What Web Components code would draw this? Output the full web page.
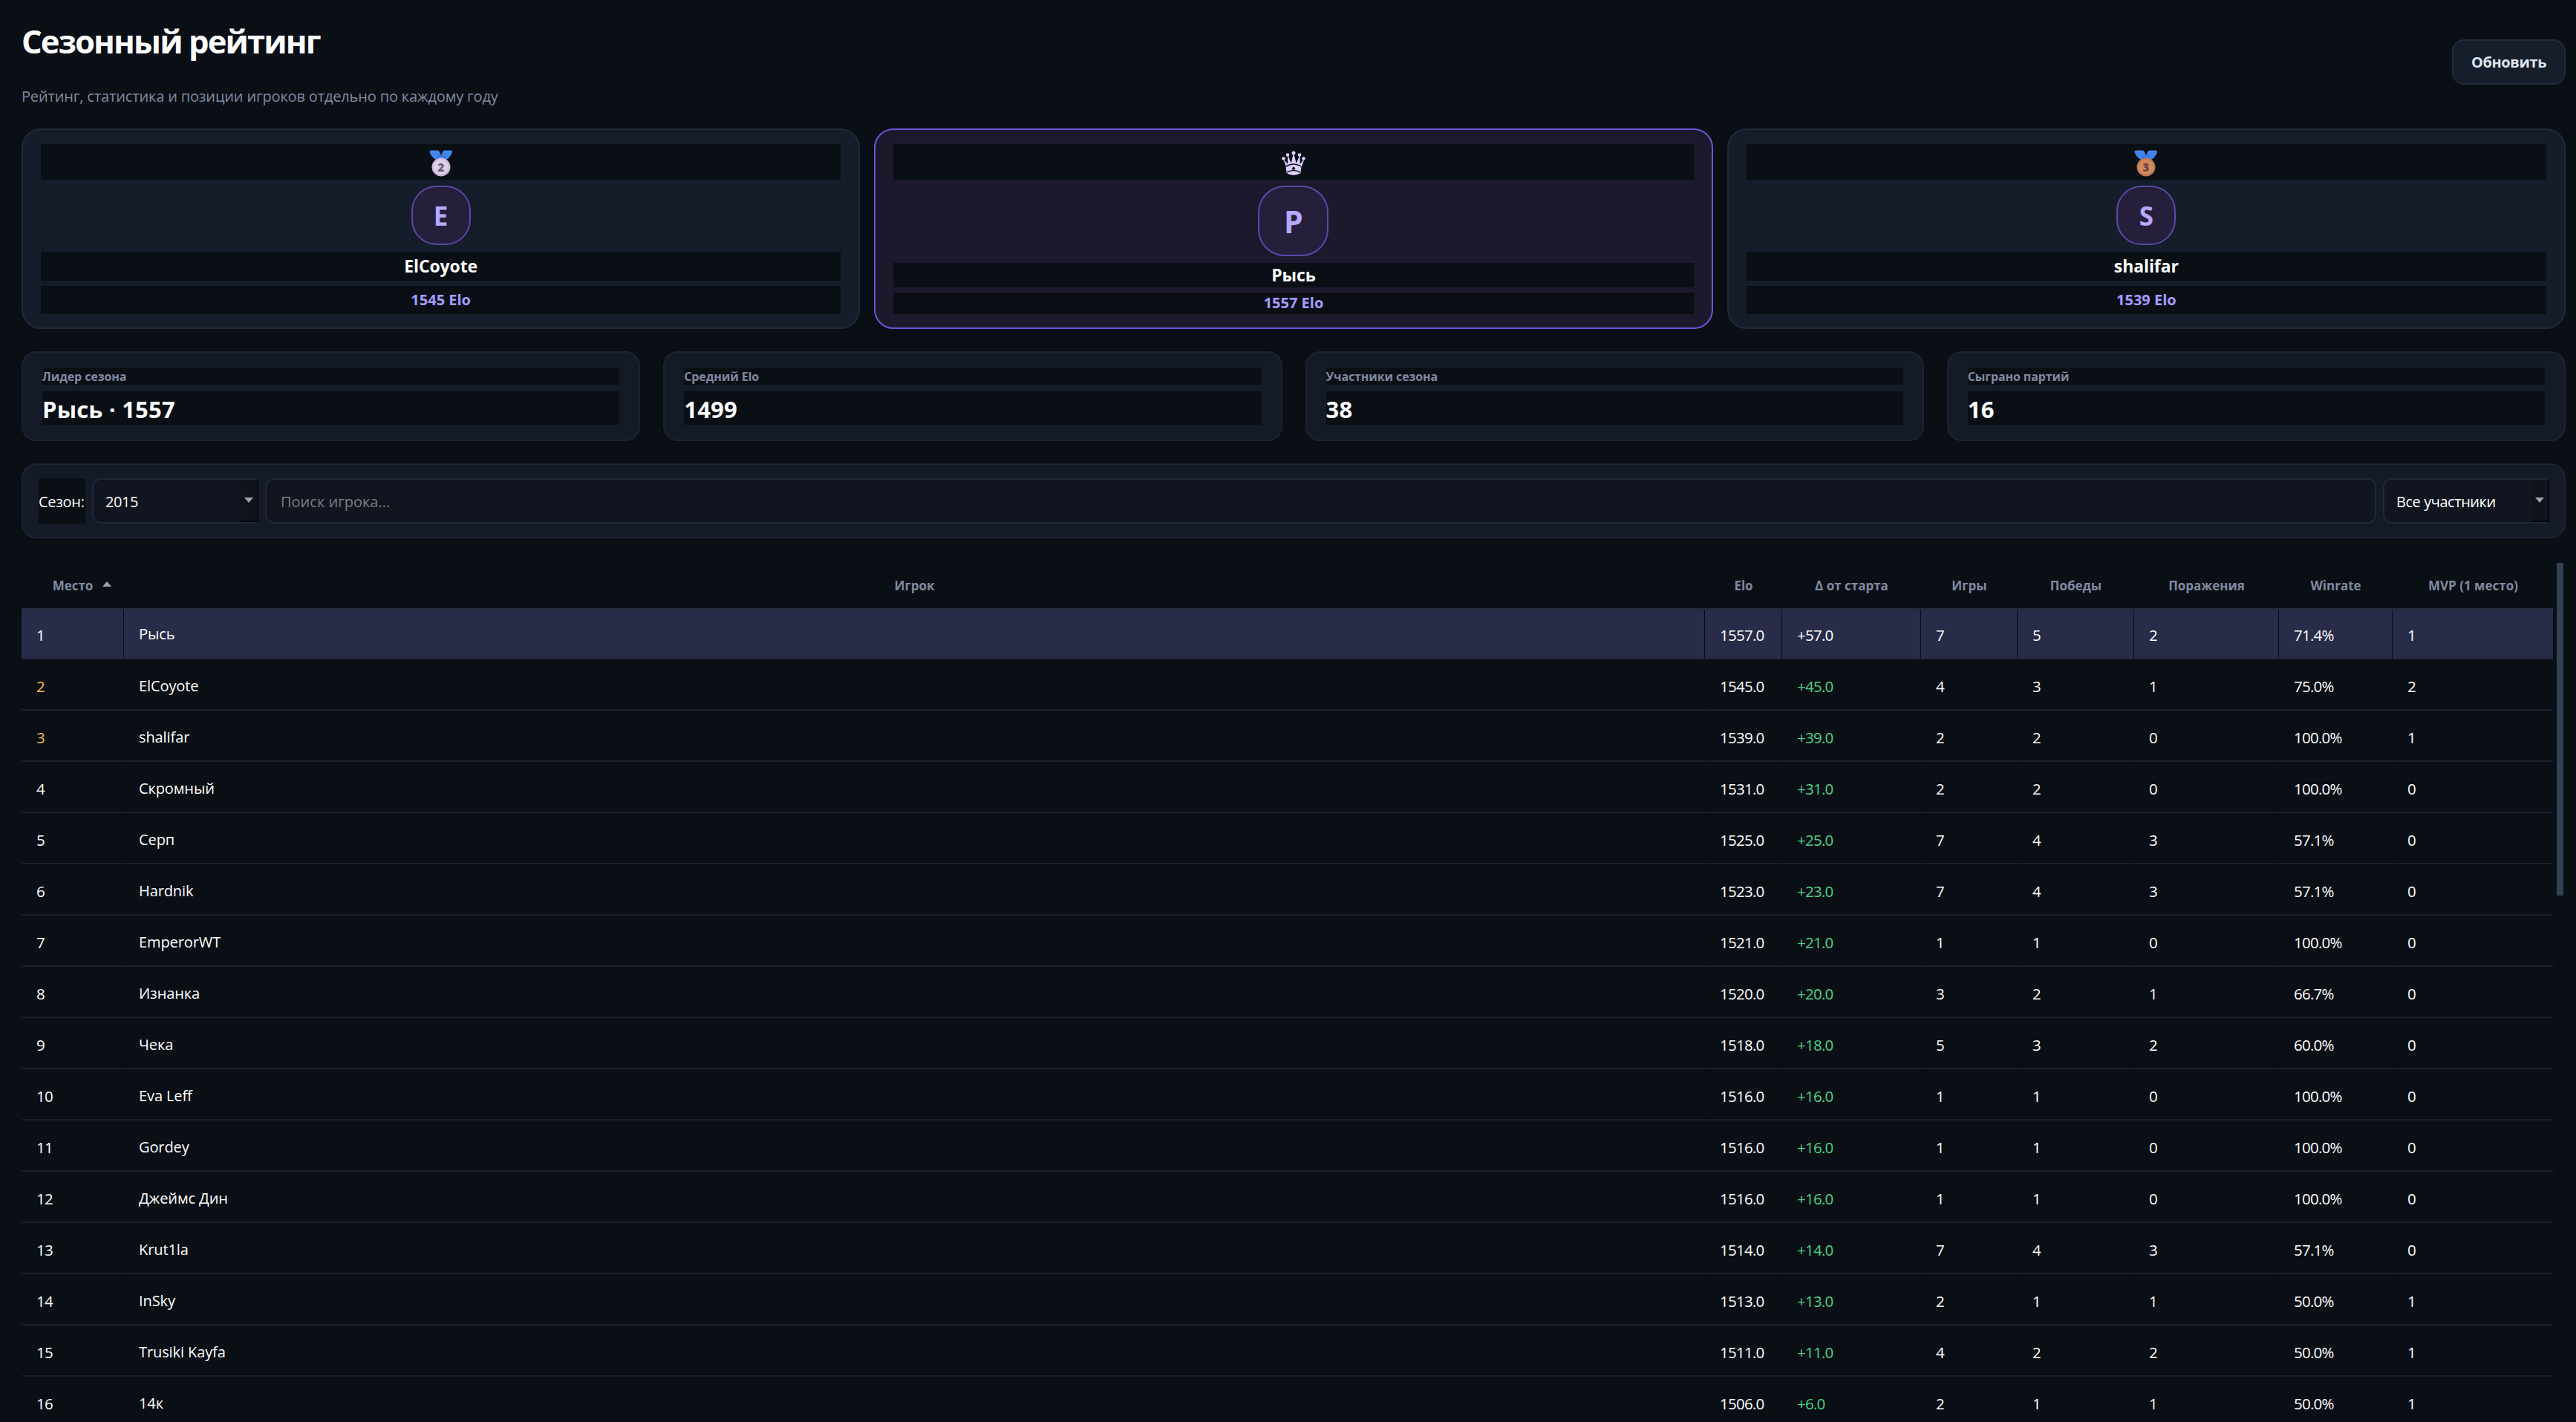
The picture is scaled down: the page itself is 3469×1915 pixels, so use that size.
<!DOCTYPE html>
<html lang="ru">
<head>
<meta charset="utf-8">
<title>Сезонный рейтинг</title>
<style>
  html, body { margin: 0; height: 100%; overflow: hidden; background: #0a0e15; }
  body { font-family: 'Open Sans', 'Noto Sans', sans-serif; color: #fff; }
</style>
</head>
<body>
<rating-page></rating-page>
<script>
const define = (name, html, setup) => {
  const template = document.createElement('template');
  template.innerHTML = html;
  customElements.define(name, class extends HTMLElement {
    constructor() {
      super();
      this.attachShadow({ mode: 'open' }).appendChild(template.content.cloneNode(true));
    }

    connectedCallback() {
      if (setup) setup(this, this.shadowRoot);
    }
  });
};

const medal = (number, face, rim, ink) => `
  <svg width="32" height="36" viewBox="0 0 32 36">
    <path d="M.5 1.5Q1 .5 3 .5h8q2 0 3 2l2 5 2-5q1-2 3-2h8q2 0 2 1.5 0 3-2.500 6L25 12H7L2.800 7.500Q.3 4 .5 1.500z" fill="#4286ec"/>
    <path d="M14.500 4l1.500 4-3 5H8zM17.500 4L16 8l3 5h5z" fill="#347be5"/>
    <circle cx="16" cy="23" r="12.500" fill="${rim}"/>
    <circle cx="16" cy="22.700" r="10.300" fill="${face}"/>
    <text x="16" y="28.500" text-anchor="middle" font-family="Open Sans" font-size="15" font-weight="800" fill="${ink}">${number}</text>
  </svg>`;

const ICONS = {
  silver: medal(2, '#ddcfe8', '#cbb5d8', '#665b70'),
  bronze: medal(3, '#d28b58', '#bf7654', '#71404a'),
  crown: `
  <svg width="32" height="34" viewBox="0 0 32 34" fill="#ddd2ff">
    <circle cx="2.500" cy="10.500" r="2.300"/><circle cx="8" cy="5.500" r="2.300"/><circle cx="16" cy="3" r="2.500"/>
    <circle cx="24" cy="5.500" r="2.300"/><circle cx="29.500" cy="10.500" r="2.300"/>
    <path d="M2 11l4 10 21 0 3.500-10-6 7 .2-13-5 12L16 3l-3.200 14L8 5l.2 13z"/>
    <path d="M5.500 20Q16 14 26.500 20L25.500 30Q16 36 6.500 30z"/>
    <path d="M6 21q10-6 20 0M7 29q9-5 18 0" fill="none" stroke="#0a0e15" stroke-width="1.600"/>
    <path d="M16 21l2.500 3-2.500 3-2.500-3z" fill="#0a0e15"/>
  </svg>`,
};

define('app-button', `
  <style>
    :host {
      box-sizing: border-box;
      width: 153px;
      height: 61px;
      display: flex;
      align-items: center;
      justify-content: center;
      border: 2px solid #222b3c;
      border-radius: 16px;
      background: #171e2b;
      color: #dfe5ee;
      font-size: 20px;
      font-weight: 700;
      letter-spacing: -.4px;
    }
  </style>
  <slot></slot>
`);

define('page-header', `
  <style>
    :host { display: flex; justify-content: space-between; height: 144px; }
    h1 { margin: -3px 0 0; font-size: 43.500px; line-height: 60px; letter-spacing: -1.850px; }
    p { margin: 30px 0 0; font-size: 20px; line-height: 28px; letter-spacing: -.16px; color: #7f8ba0; }
    app-button { margin-top: 24px; }
  </style>
  <div>
    <h1>Сезонный рейтинг</h1>
    <p>Рейтинг, статистика и позиции игроков отдельно по каждому году</p>
  </div>
  <app-button>Обновить</app-button>
`);

define('podium-card', `
  <style>
    :host {
      box-sizing: border-box;
      display: flex;
      flex-direction: column;
      gap: 7px;
      padding: 19px 24px 18px;
      border: 2px solid #202a3b;
      border-radius: 26px;
      background: #151c2a;
      text-align: center;
    }
    :host([leader]) { background: #1c192d; border-color: #6b56d6; }
    div { background: #0a0e15; display: flex; align-items: center; justify-content: center; }
    .icon { height: 48px; }
    .icon svg { display: block; margin-top: 4px; }
    .avatar {
      box-sizing: border-box;
      width: 80px;
      height: 80px;
      margin: 1px auto 2px;
      border: 2px solid #584aa8;
      border-radius: 34px;
      background: #261f3c;
      color: #b7a8ff;
      font-size: 35px;
      font-weight: 700;
    }
    .name { height: 39px; line-height: 37px; font-size: 23px; font-weight: 700; letter-spacing: -.1px; }
    .elo { height: 38px; line-height: 36px; font-size: 20px; font-weight: 700; color: #a59cff; }
    .elo { box-sizing: border-box; padding-bottom: 1px; }
    :host([leader]) .avatar { width: 95px; height: 95px; border-radius: 36px; font-size: 41px; }
    :host([leader]) .name { height: 33px; }
    :host([leader]) .elo { height: 29px; }
  </style>
  <div class="icon"></div>
  <div class="avatar"></div>
  <div class="name"><slot></slot></div>
  <div class="elo"></div>
`, (host, root) => {
  root.querySelector('.icon').innerHTML = ICONS[host.getAttribute('icon')];
  root.querySelector('.avatar').textContent = host.getAttribute('letter');
  root.querySelector('.elo').textContent = host.getAttribute('elo') + ' Elo';
});

define('stat-card', `
  <style>
    :host {
      box-sizing: border-box;
      display: flex;
      flex-direction: column;
      gap: 9px;
      padding: 20px 26px;
      border: 2px solid #1c2433;
      border-radius: 20px;
      background: #151a27;
      font-weight: 700;
    }
    .label { height: 23px; line-height: 25px; font-size: 16px; color: #7f8ba0; background: #0a0e15; letter-spacing: -.1px; }
    .value { height: 45px; line-height: 49px; font-size: 31px; background: #0a0e15; letter-spacing: .2px; }
  </style>
  <div class="label"></div>
  <div class="value"><slot></slot></div>
`, (host, root) => {
  root.querySelector('.label').textContent = host.getAttribute('label');
});

define('select-box', `
  <style>
    :host {
      box-sizing: border-box;
      width: 224px;
      height: 61px;
      display: flex;
      align-items: center;
      padding-left: 16px;
      border: 2px solid #1f2838;
      border-right: none;
      border-radius: 12px 6px 6px 12px;
      background: #10151f;
    }
    span { flex: 1; padding-top: 2px; letter-spacing: -.45px; }
    i {
      box-sizing: border-box;
      width: 24px;
      height: 57px;
      display: flex;
      align-items: center;
      justify-content: center;
      border-right: 2px solid #05070b;
      border-bottom: 2px solid #05070b;
      background: #0f131c;
    }
  </style>
  <span><slot></slot></span>
  <i><svg width="12" height="7" viewBox="0 0 12 7"><path d="M0 0h12L6 7z" fill="#a0a3a8"/></svg></i>
`);

define('filter-bar', `
  <style>
    :host {
      box-sizing: border-box;
      display: flex;
      align-items: center;
      gap: 9px;
      height: 101px;
      padding: 0 20px 0 21px;
      border: 2px solid #1c2433;
      border-radius: 20px;
      background: #151a27;
      font-size: 20px;
    }
    label { width: 63px; height: 61px; line-height: 63px; background: #0a0e15; white-space: nowrap; letter-spacing: -.3px; }
    .search {
      box-sizing: border-box;
      flex: 1;
      height: 61px;
      line-height: 59px;
      padding-left: 19px;
      border: 2px solid #1f2838;
      border-radius: 12px;
      background: #10151f;
      color: #797d83;
    }
  </style>
  <label>Сезон:</label>
  <select-box>2015</select-box>
  <div class="search">Поиск игрока...</div>
  <select-box>Все участники</select-box>
`);

const PLAYERS = [
  ['Рысь', '1557.0', '+57.0', 7, 5, 2, '71.4%', 1],
  ['ElCoyote', '1545.0', '+45.0', 4, 3, 1, '75.0%', 2],
  ['shalifar', '1539.0', '+39.0', 2, 2, 0, '100.0%', 1],
  ['Скромный', '1531.0', '+31.0', 2, 2, 0, '100.0%', 0],
  ['Серп', '1525.0', '+25.0', 7, 4, 3, '57.1%', 0],
  ['Hardnik', '1523.0', '+23.0', 7, 4, 3, '57.1%', 0],
  ['EmperorWT', '1521.0', '+21.0', 1, 1, 0, '100.0%', 0],
  ['Изнанка', '1520.0', '+20.0', 3, 2, 1, '66.7%', 0],
  ['Чека', '1518.0', '+18.0', 5, 3, 2, '60.0%', 0],
  ['Eva Leff', '1516.0', '+16.0', 1, 1, 0, '100.0%', 0],
  ['Gordey', '1516.0', '+16.0', 1, 1, 0, '100.0%', 0],
  ['Джеймс Дин', '1516.0', '+16.0', 1, 1, 0, '100.0%', 0],
  ['Krut1la', '1514.0', '+14.0', 7, 4, 3, '57.1%', 0],
  ['InSky', '1513.0', '+13.0', 2, 1, 1, '50.0%', 1],
  ['Trusiki Kayfa', '1511.0', '+11.0', 4, 2, 2, '50.0%', 1],
  ['14к', '1506.0', '+6.0', 2, 1, 1, '50.0%', 1],
];
const COLUMNS = ['Место', 'Игрок', 'Elo', 'Δ от старта', 'Игры', 'Победы', 'Поражения', 'Winrate', 'MVP (1 место)'];

define('rating-table', `
  <style>
    :host { display: flex; align-items: flex-start; gap: 4px; }
    .table { width: 3410px; font-size: 20.500px; }
    .row { display: grid; grid-template-columns: 138px 1fr 104px 187px 130px 157px 195px 153px 217px; }
    .head { height: 61px; border-bottom: 2px solid #252c3d; font-size: 17px; font-weight: 700; color: #7f8ba0; }
    .head span { display: flex; align-items: center; justify-content: center; gap: 13px; }
    .head span:first-child { padding-left: 25px; }
    .head span svg { margin-top: -5px; }
    .line span {
      box-sizing: border-box;
      height: 69px;
      line-height: 72px;
      padding-left: 20px;
      border-bottom: 2px solid #1a1f2d;
      border-right: 1px solid #0a0e15;
      letter-spacing: -.75px;
    }
    .line .player { font-size: 20px; letter-spacing: -.1px; }
    .selected span { height: 67px; line-height: 68px; background: #282c48; border-color: #080b12; border-bottom: 2px solid #20243a; }
    .selected .player { padding: 11px 15px 11px 15px; }
    .selected b { display: block; height: 41px; line-height: 42px; padding-left: 4px; border: 1px solid #252a43; background: #272d48; box-sizing: border-box; font-weight: 400; }
    .medal { color: #f2bb4f; }
    .plus { color: #4ad484; }
    .selected .plus { color: #fff; }
    .thumb { width: 9px; height: 448px; background: #334155; }
  </style>
  <div class="table"></div>
  <div class="thumb"></div>
`, (host, root) => {
  const arrow = '<svg width="12" height="7" viewBox="0 0 12 7"><path d="M0 7h12L6 0z" fill="#a0a3a8"/></svg>';
  const head = COLUMNS.map((name, i) => `<span>${name}${i === 0 ? arrow : ''}</span>`).join('');
  const lines = PLAYERS.map(([name, elo, delta, ...rest], i) => `
    <div class="row line ${i === 0 ? 'selected' : ''}">
      <span class="${i === 1 || i === 2 ? 'medal' : ''}">${i + 1}</span>
      <span class="player">${i === 0 ? `<b>${name}</b>` : name}</span>
      <span>${elo}</span>
      <span class="plus">${delta}</span>
      ${rest.map((value) => `<span>${value}</span>`).join('')}
    </div>`).join('');
  root.querySelector('.table').innerHTML = `<div class="row head">${head}</div>${lines}`;
});

define('rating-page', `
  <style>
    :host { box-sizing: border-box; display: block; width: 3469px; height: 1915px; overflow: hidden; padding: 29px 14px 0 29px; }
    .podium { display: grid; grid-template-columns: repeat(3, 1fr); gap: 19px; height: 269px; }
    .stats { display: grid; grid-template-columns: repeat(4, 1fr); gap: 31px; height: 121px; margin: 31px 0 30px; }
    rating-table { margin-top: 33px; }
  </style>
  <page-header></page-header>
  <section class="podium">
    <podium-card icon="silver" letter="E" elo="1545">ElCoyote</podium-card>
    <podium-card leader icon="crown" letter="Р" elo="1557">Рысь</podium-card>
    <podium-card icon="bronze" letter="S" elo="1539">shalifar</podium-card>
  </section>
  <section class="stats">
    <stat-card label="Лидер сезона">Рысь · 1557</stat-card>
    <stat-card label="Средний Elo">1499</stat-card>
    <stat-card label="Участники сезона">38</stat-card>
    <stat-card label="Сыграно партий">16</stat-card>
  </section>
  <filter-bar></filter-bar>
  <rating-table></rating-table>
`);
</script>
</body>
</html>
